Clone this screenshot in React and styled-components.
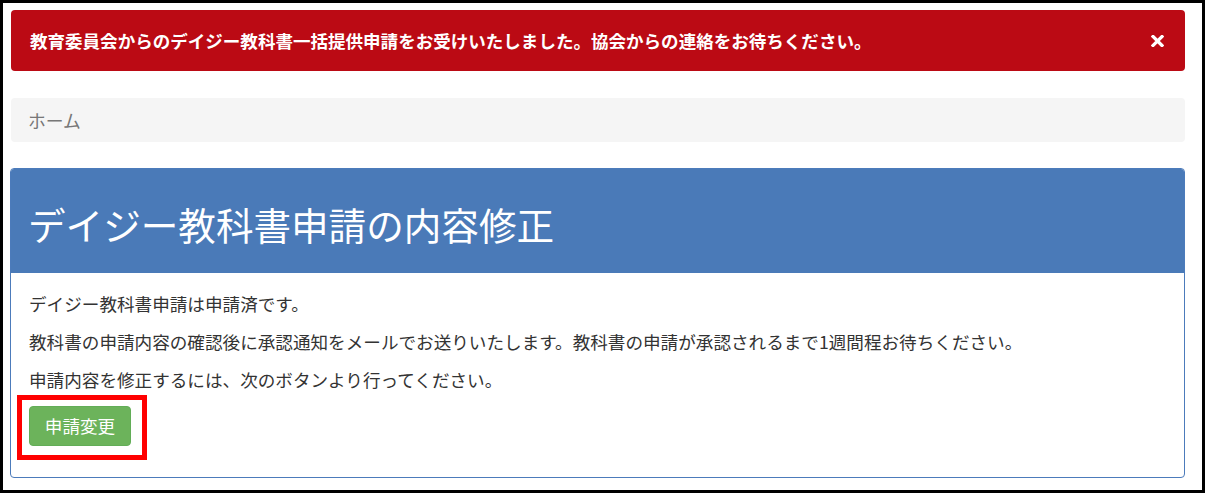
import React from "react";
import styled, { createGlobalStyle } from "styled-components";

const Global = createGlobalStyle`
  html, body { margin: 0; padding: 0; background: #000; }
  body { font-family: Meiryo, "Noto Sans CJK JP", "Noto Sans", sans-serif; }
  * { box-sizing: border-box; }
`;

const Frame = styled.div`
  width: 1205px;
  height: 493px;
  border: 3px solid #000;
  background: #fff;
  padding: 7px 17px 0 7px;
  display: flex;
  flex-direction: column;
  overflow: hidden;
`;

const Alert = styled.div`
  height: 61px;
  margin-left: 1px;
  background: #bb0a14;
  border-radius: 4px;
  padding: 0 21px 0 19px;
  display: flex;
  align-items: center;
  justify-content: space-between;
  color: #fff;
  font-size: 17.55px;
  font-weight: 700;
  line-height: 24px;
`;

const CloseButton = styled.button`
  border: 0;
  background: transparent;
  padding: 0;
  width: 14px;
  height: 14px;
  display: flex;
  align-items: center;
  justify-content: center;
  cursor: pointer;
`;

const Breadcrumb = styled.div`
  margin-top: 27px;
  margin-left: 1px;
  height: 44px;
  background: #f5f5f5;
  border-radius: 4px;
  padding: 0 17px;
  display: flex;
  align-items: center;
  color: #777;
  font-size: 17.8px;
`;

const Panel = styled.section`
  margin-top: 26px;
  border: 1px solid #4c7bbb;
  border-radius: 4px;
  overflow: hidden;
`;

const PanelHeading = styled.div`
  height: 104px;
  background: #4a7ab8;
  padding: 6px 17px 0;
  display: flex;
  align-items: center;
`;

const Title = styled.h1`
  margin: 0;
  color: #fff;
  font-size: 37.6px;
  font-weight: 400;
  line-height: 44px;
`;

const PanelBody = styled.div`
  padding: 19px 18px 31px;
  color: #333;
  font-size: 17.6px;
  line-height: 24px;
`;

const Paragraph = styled.p`
  margin: 0 0 14px;
`;

const ButtonSpot = styled.div`
  position: relative;
  display: inline-block;
`;

const Highlight = styled.span`
  position: absolute;
  top: -11px;
  left: -12px;
  right: -16px;
  bottom: -14px;
  border: 5px solid #ff0000;
  pointer-events: none;
`;

const SuccessButton = styled.button`
  display: block;
  height: 40px;
  width: 102px;
  padding: 0;
  border: 1px solid #62ad57;
  border-radius: 4px;
  background: #6cb35b;
  color: #fff;
  font-family: inherit;
  font-size: 17.6px;
  line-height: 24px;
  cursor: pointer;
`;

export default function App() {
  return (
    <>
      <Global />
      <Frame>
        <Alert>
          <span>教育委員会からのデイジー教科書一括提供申請をお受けいたしました。協会からの連絡をお待ちください。</span>
          <CloseButton aria-label="close">
            <svg width="13" height="12" viewBox="0 0 13 12">
              <path d="M2 1.5 L11 10.5 M11 1.5 L2 10.5" stroke="#fff" strokeWidth="3.2" strokeLinecap="square" />
            </svg>
          </CloseButton>
        </Alert>
        <Breadcrumb>ホーム</Breadcrumb>
        <Panel>
          <PanelHeading>
            <Title>デイジー教科書申請の内容修正</Title>
          </PanelHeading>
          <PanelBody>
            <Paragraph>デイジー教科書申請は申請済です。</Paragraph>
            <Paragraph>教科書の申請内容の確認後に承認通知をメールでお送りいたします。教科書の申請が承認されるまで1週間程お待ちください。</Paragraph>
            <Paragraph>申請内容を修正するには、次のボタンより行ってください。</Paragraph>
            <ButtonSpot>
              <SuccessButton>申請変更</SuccessButton>
              <Highlight />
            </ButtonSpot>
          </PanelBody>
        </Panel>
      </Frame>
    </>
  );
}
